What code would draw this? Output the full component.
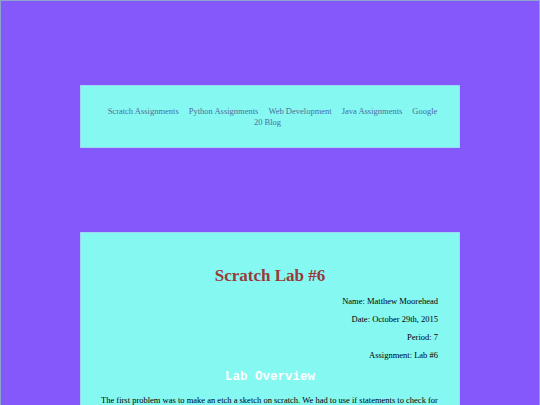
export default function App() {
  const links = ["Scratch Assignments", "Python Assignments", "Web Development", "Java Assignments", "Google 20 Blog"];
  return (
    <div className="min-h-[405px] bg-[#8458fa] border border-[#8ea3cc] font-['Liberation_Serif',serif] pt-[84px] overflow-hidden">
      <div className="mx-auto w-[380px] h-[63px] bg-[#86f8f2] border border-[#9fd4f4] px-[17px] pt-[20px] text-center text-[8.5px] leading-[11px] text-[#4a6f9e]">
        {links.map((l) => (
          <a key={l} className="mx-[5px]">{l}</a>
        ))}
      </div>
      <div className="mx-auto mt-[84px] w-[380px] bg-[#86f8f2] border border-[#9fd4f4] px-[20px] pt-[30px] pb-[20px]">
        <h1 className="text-center text-[17px] font-bold text-[#983a3a] leading-[22px] mt-[2px]">Scratch Lab #6</h1>
        <div className="text-right text-[8.5px] leading-[11px] text-black mt-[9px] pr-[1px]">
          <p className="mb-[7px]">Name: Matthew Moorehead</p>
          <p className="mb-[7px]">Date: October 29th, 2015</p>
          <p className="mb-[7px]">Period: 7</p>
          <p>Assignment: Lab #6</p>
        </div>
        <h2 className="text-center font-['Liberation_Mono',monospace] font-bold text-white text-[12.5px] leading-[15px] mt-[9px]">Lab Overview</h2>
        <p className="text-[8.5px] leading-[11px] text-black mt-[10px]">
          The first problem was to make an etch a sketch on scratch. We had to use if statements to check for
        </p>
      </div>
    </div>
  );
}
